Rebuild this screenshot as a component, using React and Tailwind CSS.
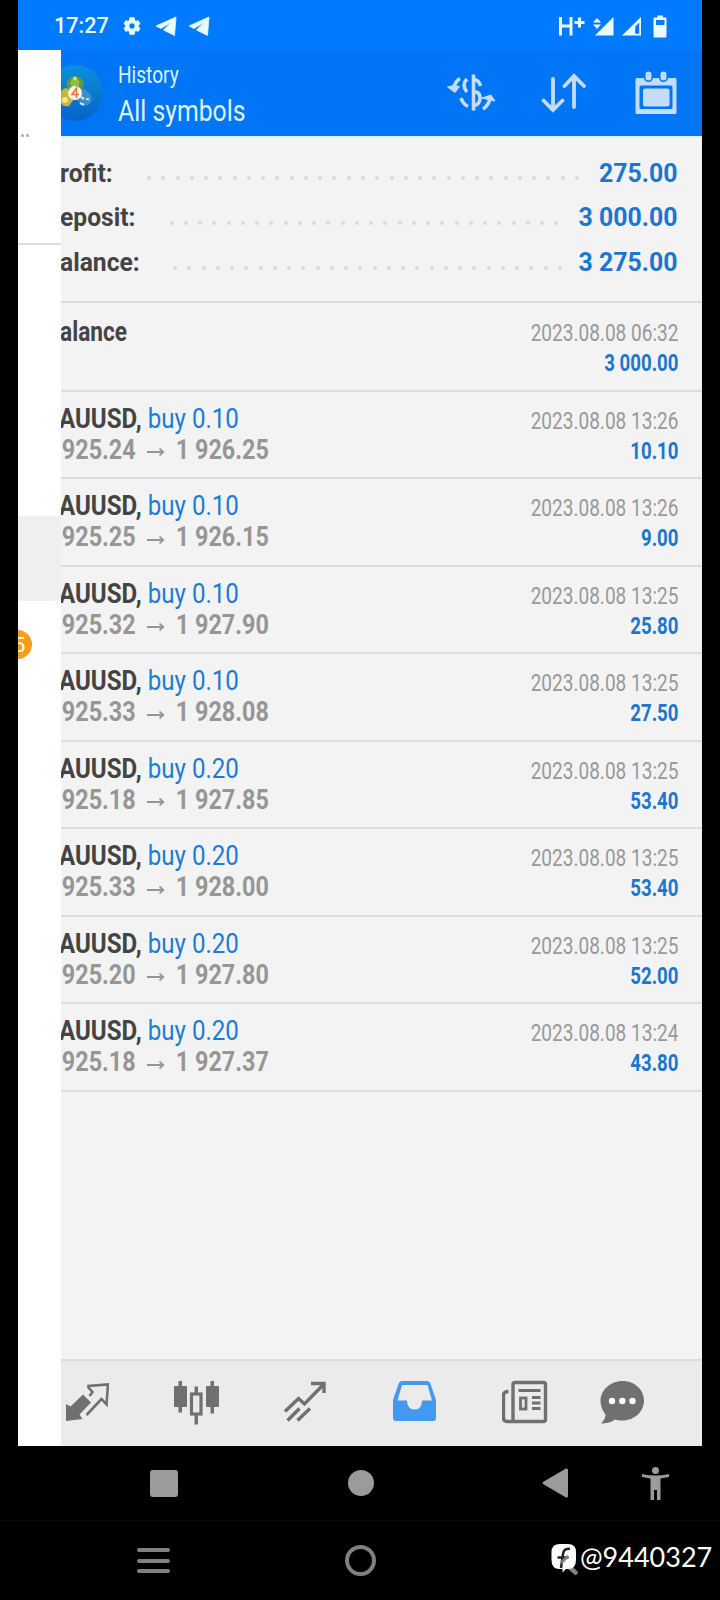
import React from "react";

const summary = [
  { label: "rofit:", value: "275.00", dots: 31, labelBox: "w-[86px]", dotsBox: "w-[432px]" },
  { label: "eposit:", value: "3 000.00", dots: 28, labelBox: "w-[108.500px]", dotsBox: "w-[389px]" },
  { label: "alance:", value: "3 275.00", dots: 28, labelBox: "w-[112px]", dotsBox: "w-[389px]" },
];

const deals = [
  { volume: "0.10", open: "925.24", close: "1 926.25", time: "13:26", profit: "10.10" },
  { volume: "0.10", open: "925.25", close: "1 926.15", time: "13:26", profit: "9.00" },
  { volume: "0.10", open: "925.32", close: "1 927.90", time: "13:25", profit: "25.80" },
  { volume: "0.10", open: "925.33", close: "1 928.08", time: "13:25", profit: "27.50" },
  { volume: "0.20", open: "925.18", close: "1 927.85", time: "13:25", profit: "53.40" },
  { volume: "0.20", open: "925.33", close: "1 928.00", time: "13:25", profit: "53.40" },
  { volume: "0.20", open: "925.20", close: "1 927.80", time: "13:25", profit: "52.00" },
  { volume: "0.20", open: "925.18", close: "1 927.37", time: "13:24", profit: "43.80" },
];

function Telegram() {
  return (
    <svg width="22" height="20" viewBox="0 0 22 20" fill="#e9fbff">
      <path d="M20 1L0 10L5 12.500L15.500 6L7.500 14L18.500 19.500Z" stroke="#e9fbff" strokeWidth="0.8" strokeLinejoin="round" />
    </svg>
  );
}

function StatusBar() {
  return (
    <div className="flex h-[50px] items-center bg-[#007bff] pt-px pr-[35px] pl-9 text-[#e9fbff]">
      <span className="w-[68px] origin-left scale-x-[0.96] text-[22.5px] font-medium whitespace-nowrap">
        17:27
      </span>
      <svg width="20" height="20" viewBox="0 0 24 24" fill="currentColor" stroke="currentColor">
        <path d="M19.4 13a7.500 7.500 0 0 0 0-2l2.200-1.700-2.200-3.800-2.600 1a7.500 7.500 0 0 0-1.700-1L14.700 2H9.300l-.4 3.500a7.500 7.500 0 0 0-1.700 1l-2.600-1-2.200 3.800L4.600 11a7.500 7.500 0 0 0 0 2l-2.200 1.700 2.200 3.800 2.600-1a7.500 7.500 0 0 0 1.700 1l.4 3.500h5.400l.4-3.500a7.500 7.500 0 0 0 1.700-1l2.600 1 2.200-3.800zM12 15.800a3.800 3.800 0 1 1 0-7.600 3.800 3.800 0 0 1 0 7.600z" />
      </svg>
      <div className="ml-[14px] flex gap-[11px]">
        <Telegram />
        <Telegram />
      </div>
      <svg className="ml-auto" width="110" height="24" viewBox="557 13 110 24" fill="currentColor">
        <path d="M560.500 16v18.500M571 16v18.500M560.500 25H571M574.500 21.500h10M579.500 16.500v10" stroke="currentColor" strokeWidth="3" fill="none" />
        <path d="M613.500 16v18.500H595z" />
        <path d="M593 21.500l4-4.500 4 4.500zM593 23.500l4 4.500 4-4.500z" />
        <path fillRule="evenodd" d="M641 16v18.500H622zM639.200 21.500l-4 4.300v7h4z" />
        <path fillRule="evenodd" d="M657.500 14.500h5.500v2h2.500q1 0 1 1v18q0 1-1 1h-11q-1 0-1-1v-18q0-1 1-1h3zM656 19v5h8.500v-5z" />
      </svg>
    </div>
  );
}

function Logo() {
  return (
    <svg className="shrink-0" width="43" height="58" viewBox="61 64 43 58">
      <defs>
        <linearGradient id="sky" x1="0" y1="0" x2="0" y2="1">
          <stop offset="0" stopColor="#0b90dc" />
          <stop offset="1" stopColor="#0763c8" />
        </linearGradient>
      </defs>
      <circle cx="75" cy="93" r="28" fill="url(#sky)" />
      <path d="M69 92L66 83Q70 76 75 76Q81 76 84 83L81 93z" fill="#5e9a3e" />
      <circle cx="75" cy="83" r="4.500" fill="#8cbf45" />
      <circle cx="75" cy="78.500" r="2" fill="#c9de8d" />
      <path d="M59 97Q61 88 67 88L74 99L69 106Q60 108 59 97z" fill="#c9b53c" />
      <circle cx="65" cy="100" r="3" fill="#f0e48a" />
      <path d="M79 88Q90 89 92 99Q90 108 82 105L75 98z" fill="#3f8ccb" />
      <path d="M81 97l3 2M86 99l3 .5M80 103l4 2" stroke="#c8e8fa" strokeWidth="2.200" fill="none" />
      <circle cx="75" cy="93" r="7" fill="#fff3e8" />
      <path d="M76.500 98v-10l-4.500 6.500h7" stroke="#e5793f" strokeWidth="1.600" fill="none" />
    </svg>
  );
}

function Header() {
  return (
    <div className="flex h-[88px] shrink-0 items-center border-b-2 border-[#e6f0fb] bg-[#0075f5] text-[#dff2ff]">
      <Logo />
      <div className="ml-[14px] w-[230px] pt-[3px] whitespace-nowrap">
        <div className="origin-left scale-x-[0.83] text-[23px] leading-[33px]">History</div>
        <div className="origin-left scale-x-[0.855] text-[29px] leading-[39px]">All symbols</div>
      </div>
      <svg className="ml-auto" width="50" height="40" viewBox="446 73 50 40" fill="none" stroke="#c3ddfa" strokeWidth="3.600">
        <path d="M473.500 74.500v36M467 79q-6 6 0 13M461 98q2 6 7 8.500M474 79.500q5 .5 6.500 6.500M474 92h2q4 1 4 6t-4 7h-2" />
        <path d="M460 78.500q-5 3-6 9M483 109q6-4 7-11" />
        <path d="M447.500 87l6.500-1.500 5.500 1-4.500 6zM482 98l9-3 4 6-5-1z" fill="#c3ddfa" strokeWidth="1" strokeLinejoin="round" />
      </svg>
      <svg className="ml-[45px]" width="46" height="40" viewBox="541 73 46 40" fill="none" stroke="#c3ddfa" strokeWidth="3.800" strokeLinecap="round">
        <path d="M553 79v31M543.500 100.500L553 110l9.500-9.500M574 107V76M564.500 86L574 76l10 10" />
      </svg>
      <svg className="mr-[24px] ml-[48px]" width="43" height="44" viewBox="635 71 43 44">
        <path fillRule="evenodd" fill="#c3ddfa" d="M637 78h38q1.500 0 1.500 1.500v33q0 1.500-1.500 1.500h-38q-1.500 0-1.500-1.500v-33q0-1.500 1.500-1.500zM641 85.500q-1.500 0-1.500 1.500v20.500q0 1.500 1.500 1.500h30q1.500 0 1.500-1.500v-20.500q0-1.500-1.500-1.500z" />
        <rect x="643" y="88.500" width="26.500" height="18" rx="2" fill="#c3ddfa" />
        <path d="M648.500 74.500v3M663.500 74.500v3" stroke="#0075f5" strokeWidth="9" strokeLinecap="round" />
        <path d="M648.500 74.500v3M663.500 74.500v3" stroke="#c3ddfa" strokeWidth="6" strokeLinecap="round" />
      </svg>
    </div>
  );
}

function Drawer() {
  return (
    <div className="flex w-[43px] shrink-0 flex-col overflow-hidden bg-white">
      <div className="flex h-[195px] shrink-0 items-start gap-0.5 border-b-2 border-[#dedede] pt-[84px] pl-[3px]">
        <span className="h-[3px] w-[3px] rounded-full bg-[#aaa]" />
        <span className="h-[3px] w-[3px] rounded-full bg-[#aaa]" />
      </div>
      <div className="mt-[271px] h-[85px] shrink-0 bg-[#efefef]" />
      <div className="mt-[29px] -ml-[15px] flex h-[29px] w-[29px] shrink-0 items-center justify-center rounded-full bg-[#fb9c1c] pl-1 text-xl text-white">
        5
      </div>
    </div>
  );
}

function SummaryRow({ row }) {
  return (
    <div className="flex h-[44.700px] items-center text-[25.500px] font-bold whitespace-nowrap">
      <div className={row.labelBox}>
        <span className="-ml-px inline-block origin-left scale-x-[0.965] text-[#444]">{row.label}</span>
      </div>
      <div className={`mt-[11px] flex justify-between ${row.dotsBox}`}>
        {Array.from({ length: row.dots }, (_, i) => (
          <span key={i} className="h-1 w-1 rounded-full bg-[#dadada]" />
        ))}
      </div>
      <span className="ml-auto origin-right scale-x-[0.975] text-[#1b76cf]">{row.value}</span>
    </div>
  );
}

function Stamp({ time, value }) {
  return (
    <div className="pt-[3px] text-right">
      <div className="origin-right scale-x-[0.81] text-[23.500px] leading-[30px] text-[#999]">2023.08.08 {time}</div>
      <div className="origin-right scale-x-[0.81] text-[23px] leading-[31px] font-bold text-[#1b76cf]">{value}</div>
    </div>
  );
}

function DealRow({ deal }) {
  return (
    <div className="flex h-[87.500px] shrink-0 justify-between border-b-2 border-[#dcdcdc] pt-[11px] pr-6 whitespace-nowrap">
      <div className="text-[28px] leading-[31px]">
        <div className="-ml-0.5 origin-left scale-x-[0.86]">
          <span className="font-bold text-[#444]">AUUSD,</span>{" "}
          <span className="text-[#1c7bd6]">buy {deal.volume}</span>
        </div>
        <div className="flex origin-left scale-x-[0.835] items-center pl-px font-bold text-[#969696]">
          {deal.open}
          <svg className="mr-[13px] ml-[14px] mt-1.5" width="21" height="10" viewBox="0 0 21 10" fill="none" stroke="#969696" strokeWidth="2">
            <path d="M0 5h19M15 1.500l4.500 3.500-4.500 3.500" />
          </svg>
          {deal.close}
        </div>
      </div>
      <Stamp time={deal.time} value={deal.profit} />
    </div>
  );
}

function TabBar() {
  return (
    <div className="flex h-[87px] shrink-0 items-start border-t-2 border-[#dcdcdc] bg-[#ebebeb] pt-[19px] pl-[3.500px] text-[#707070]">
      <svg width="44" height="44" viewBox="64.500 1380 44 44" fill="none" stroke="currentColor" strokeWidth="2.600">
        <path d="M65.500 1404l4.500 2.500 12.500-12 8 8-11.500 12 3 4.500-16.500 2z" fill="currentColor" stroke="none" />
        <path d="M89 1396l3-4-4-4.500v-1.500l19.500-1.500-1.500 20-5-5.500-15 16" />
      </svg>
      <svg className="ml-[65px]" width="46" height="46" viewBox="174 1379 46 46" fill="currentColor">
        <rect x="174" y="1385" width="13" height="21" rx="1" />
        <rect x="178.500" y="1380" width="3.500" height="31.500" />
        <rect x="206" y="1385" width="13" height="21" rx="1" />
        <rect x="210.500" y="1380" width="3.500" height="32.500" />
        <rect x="194.500" y="1385.500" width="3.500" height="38" />
        <rect x="191.500" y="1393" width="9.500" height="20" fill="#ebebeb" stroke="currentColor" strokeWidth="3.200" />
      </svg>
      <svg className="ml-[64px]" width="44" height="44" viewBox="284 1380 44 44" fill="none" stroke="currentColor" strokeWidth="3.400">
        <path d="M285 1411.500l13.500-13 6 5.500 19-19.500M311 1383.500h13v9.500M287.500 1420.500l12-12M297.500 1420.500l12.500-12" />
      </svg>
      <svg className="ml-[64.500px]" width="46" height="44" viewBox="392.500 1380 46 44">
        <path d="M393.500 1400l5.500-16q1-3 4-3h24q3 0 4 3l5.500 16v18q0 3-3 3h-37q-3 0-3-3z" fill="#4398f0" />
        <path d="M398 1400.500l4.500-15.500h25.500l4.500 15.500h-10q0 9-7.500 9t-7.500-9z" fill="#ebebeb" />
      </svg>
      <svg className="ml-[63.500px]" width="46" height="46" viewBox="502 1379 46 46" fill="none" stroke="currentColor" strokeWidth="3.400">
        <path d="M545.500 1384v34.500q0 2-2 2h-36q-4 0-4-4v-22q0-4 5-4M513 1420.500v-37q0-2 2-2h28.500q2 0 2 2v1" />
        <path d="M518.500 1389.500h22M532 1396.500h8.500M532 1402h8.500M532 1407.500h8.500" strokeWidth="2.800" />
        <rect x="520.500" y="1397" width="5.500" height="11" strokeWidth="2.800" />
      </svg>
      <svg className="ml-[52.500px]" width="45" height="46" viewBox="600.500 1379 45 46" fill="currentColor">
        <path d="M623 1380c12 0 21.500 8.500 21.500 19.500s-9.500 20-21.500 20c-3 0-5-.3-7.500-1-4 3-9 4-14 4 3-3 4.500-6 4.500-9-3-4-5-8-5-13.500C601 1389 611 1380 623 1380z" />
        <circle cx="612.500" cy="1400" r="3.200" fill="#fff" />
        <circle cx="622.800" cy="1400" r="3.200" fill="#fff" />
        <circle cx="633" cy="1400" r="3.200" fill="#fff" />
      </svg>
    </div>
  );
}

function SystemBars() {
  return (
    <div className="w-full">
      <div className="flex h-[75px] items-center border-b border-[#070710] pl-[150px] text-[#9b9b9b]">
        <div className="h-[27px] w-[28px] rounded-[3px] bg-current" />
        <div className="ml-[170px] h-[26px] w-[26px] rounded-full bg-current" />
        <svg className="ml-[168px]" width="27" height="30" viewBox="0 0 27 30" fill="currentColor">
          <path d="M1 14Q0 15 1 16L24 29.500Q26 30 26 28V2Q26 0 24 .5z" />
        </svg>
        <svg className="ml-[72px]" width="29" height="33" viewBox="641 1467 29 33" fill="currentColor">
          <circle cx="655.500" cy="1470.500" r="3.500" />
          <path d="M642 1474q13.500 3 27 0v3l-8.500 1.500V1500h-3.500v-10h-3v10h-3.500v-21.500L642 1477z" />
        </svg>
      </div>
      <div className="flex h-[79px] items-center pl-[137px]">
        <div className="flex w-[33px] flex-col gap-[6.500px]">
          <span className="h-1 rounded-full bg-[#808080]" />
          <span className="h-1 rounded-full bg-[#808080]" />
          <span className="h-1 rounded-full bg-[#808080]" />
        </div>
        <div className="ml-[175px] h-[31px] w-[31px] rounded-full border-4 border-[#808080]" />
        <svg className="mb-1 ml-[175px]" width="27" height="32" viewBox="551 1543 27 32">
          <path d="M566 1564l9.500 8.500" stroke="#808080" strokeWidth="4.500" strokeLinecap="round" />
          <path d="M560 1544h8q8 0 8 8v8q0 9-8 9h-2l-3.500 3.500v-3.500h-3q-8 0-8-9v-8q0-8 8.500-8z" fill="#fff" />
          <path d="M570 1549q-6-1-7 5l-2 14M557.500 1557.500h11" stroke="#222" strokeWidth="2.500" fill="none" />
          <path d="M561 1563l7-7" stroke="#808080" strokeWidth="3" />
        </svg>
        <span className="mb-[6px] ml-0.5 font-['Lato',sans-serif] text-[27px] whitespace-nowrap text-white">@9440327</span>
      </div>
    </div>
  );
}

export default function App() {
  return (
    <div className="h-[1600px] w-[720px] overflow-hidden bg-black font-['Roboto',sans-serif]">
      <div className="mr-[18px] ml-[18px] flex h-[1446px] flex-col overflow-hidden">
        <StatusBar />
        <div className="flex min-h-0 flex-1">
          <Drawer />
          <div className="flex min-w-0 flex-1 flex-col overflow-hidden bg-[#f3f3f3]">
            <Header />
            <div className="h-[164.500px] shrink-0 border-b-2 border-[#dcdcdc] pt-[12.500px] pr-6">
              {summary.map((row) => (
                <SummaryRow key={row.label} row={row} />
              ))}
            </div>
            <div className="flex h-[89px] shrink-0 justify-between border-b-2 border-[#dcdcdc] pt-[12.500px] pr-6">
              <div className="-ml-px origin-left scale-x-[0.81] text-[28px] leading-[33px] font-bold text-[#444]">
                alance
              </div>
              <Stamp time="06:32" value="3 000.00" />
            </div>
            <div className="-mb-1 shrink-0 pb-1">
              {deals.map((deal, i) => (
                <DealRow key={i} deal={deal} />
              ))}
            </div>
            <div className="flex-1" />
            <TabBar />
          </div>
        </div>
      </div>
      <SystemBars />
    </div>
  );
}
